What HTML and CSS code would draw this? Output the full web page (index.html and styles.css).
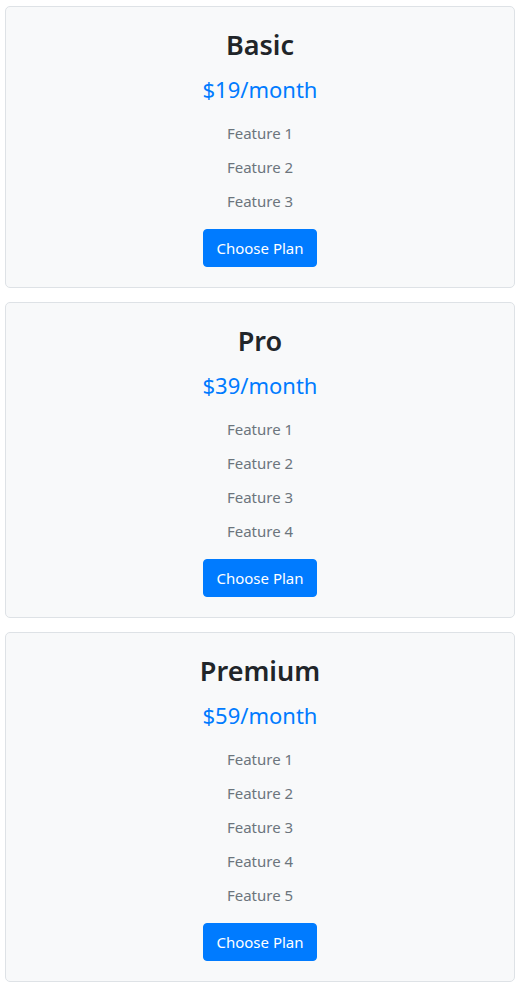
FILE: index.html
```html
<!DOCTYPE html>
<html>
<head>
<meta charset="utf-8">
<link rel="stylesheet" href="styles.css">
</head>
<body>
<main class="plans">
  <section class="card">
    <h2 class="title">Basic</h2>
    <p class="price">$19/month</p>
    <ul class="features">
      <li>Feature 1</li>
      <li>Feature 2</li>
      <li>Feature 3</li>
    </ul>
    <button class="btn">Choose Plan</button>
  </section>
  <section class="card">
    <h2 class="title">Pro</h2>
    <p class="price">$39/month</p>
    <ul class="features">
      <li>Feature 1</li>
      <li>Feature 2</li>
      <li>Feature 3</li>
      <li>Feature 4</li>
    </ul>
    <button class="btn">Choose Plan</button>
  </section>
  <section class="card">
    <h2 class="title">Premium</h2>
    <p class="price">$59/month</p>
    <ul class="features">
      <li>Feature 1</li>
      <li>Feature 2</li>
      <li>Feature 3</li>
      <li>Feature 4</li>
      <li>Feature 5</li>
    </ul>
    <button class="btn">Choose Plan</button>
  </section>
</main>
</body>
</html>
```

FILE: styles.css
```css
html, body {
  margin: 0;
  padding: 0;
  background: #ffffff;
}
body {
  font-family: "Noto Sans", "Segoe UI", sans-serif;
  color: #212529;
}
.plans {
  display: flex;
  flex-direction: column;
  gap: 14px;
  padding: 6px 8px 0 5px;
}
.card {
  border: 1px solid #dee2e6;
  border-radius: 5px;
  background: #f8f9fa;
  padding: 20px 20px 20px;
  text-align: center;
  display: flex;
  flex-direction: column;
  align-items: center;
}
.title {
  margin: 0 0 12px;
  font-size: 27px;
  font-weight: 600;
  line-height: 36px;
}
.price {
  margin: 0 0 13px;
  font-size: 22px;
  line-height: 28px;
  color: #007bff;
}
.features {
  list-style: none;
  margin: 0 0 11px;
  padding: 0;
}
.features li {
  font-size: 15px;
  line-height: 24px;
  padding: 5px 0;
  color: #6c757d;
}
.btn {
  font-family: inherit;
  font-size: 15px;
  line-height: 24px;
  padding: 6px 12px;
  border: 1px solid #007bff;
  border-radius: 4px;
  background: #007bff;
  color: #ffffff;
  width: 114px;
}
```
